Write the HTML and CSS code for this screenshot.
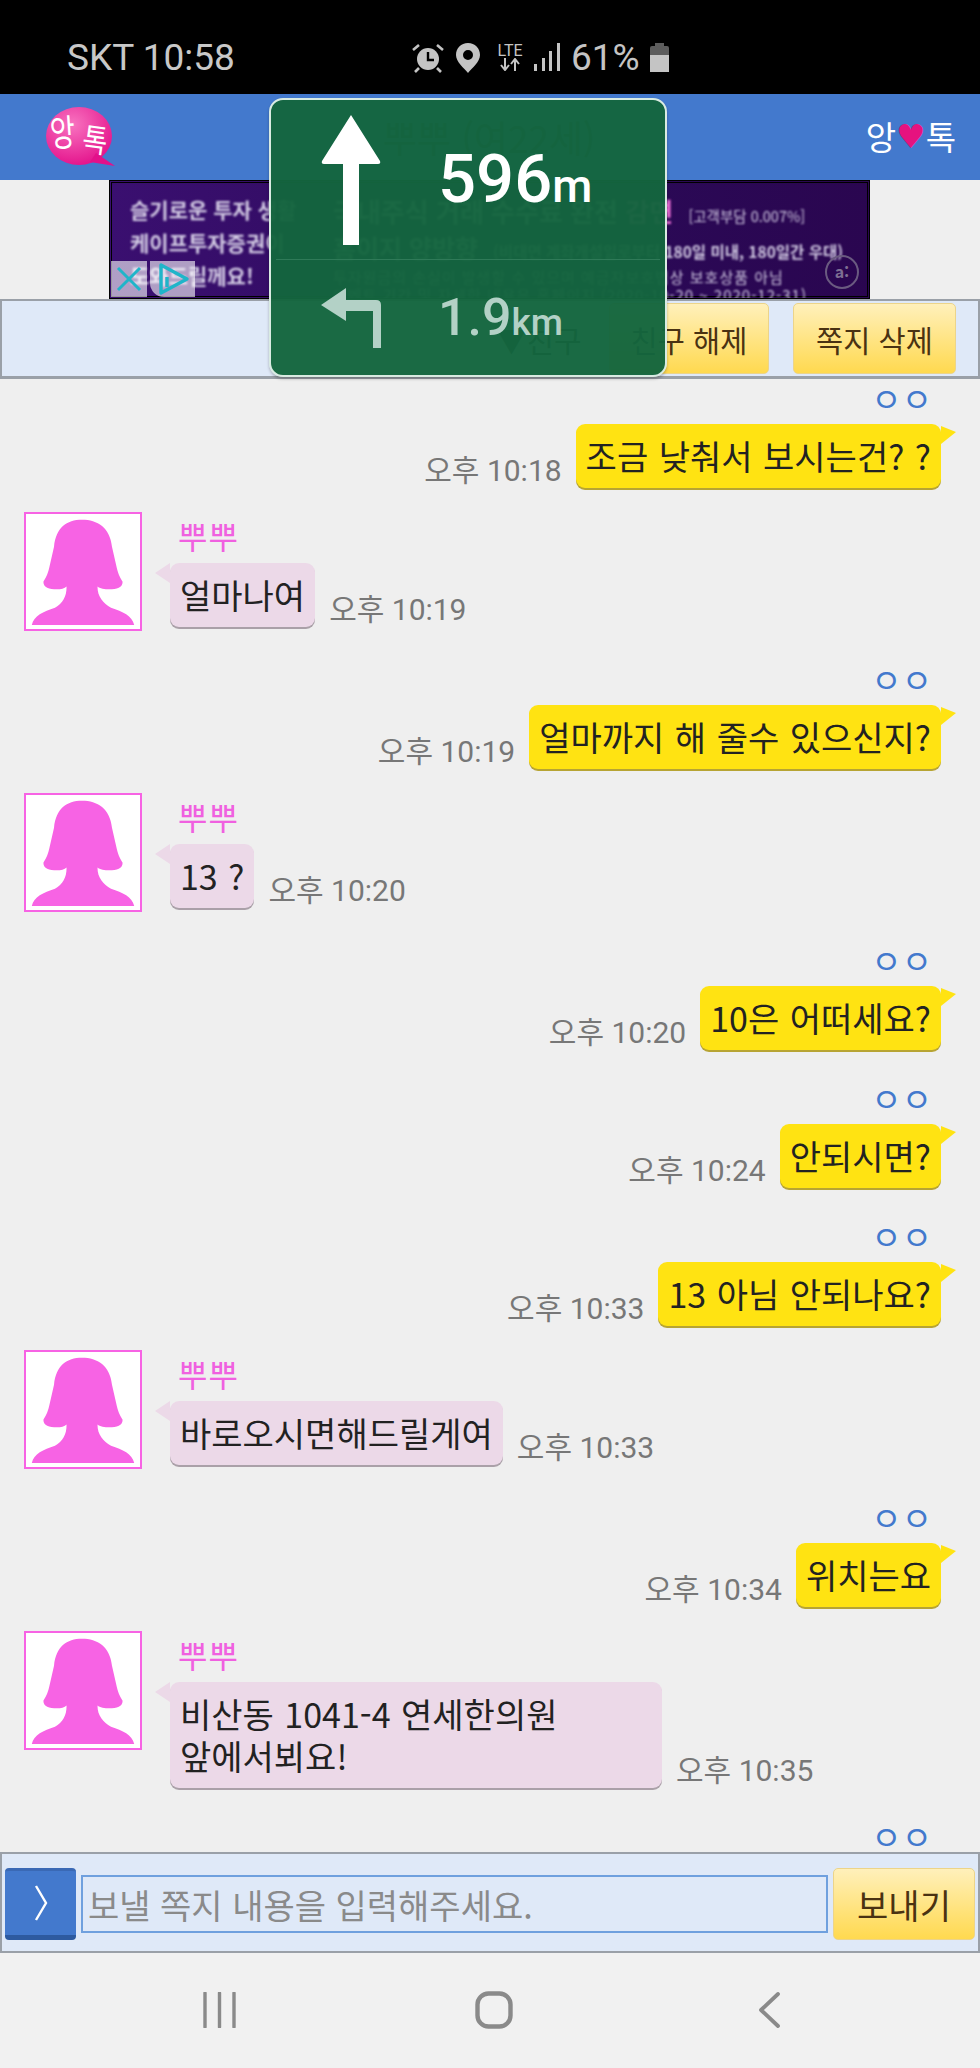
FILE: index.html
```html
<!DOCTYPE html>
<html lang="ko">
  <head>
    <meta charset="utf-8">
    <title>앙톡</title>
    <link rel="stylesheet" href="styles.css">
  </head>
  <body>
    <svg class="defs" width="0" height="0">
      <symbol id="girl" viewBox="0 0 118 119">
        <path d="M58 6C42 6 31 14 29 34L24 56C22 64 20 67 18 70C18 76 24 78 32 78C36 78 40 77 42 75C42 86 38 92 30 97C18 101 8 105 6 115H112C110 105 100 101 88 97C80 92 74 86 74 75C76 77 82 78 86 78C94 78 100 76 100 70C98 67 96 64 94 56L89 34C87 14 74 6 58 6Z"/>
      </symbol>
    </svg>

    <main id="screen">
      <header class="status">
        <span class="status-left">SKT 10:58</span>
        <div class="status-icons">
          <svg class="ico-alarm" width="32" height="30" viewBox="0 0 32 30">
            <circle cx="16" cy="16" r="11" fill="#c4c4c4"/>
            <path d="M16 9V17H22" fill="none" stroke="#000" stroke-width="2.4"/>
            <path d="M1 7L7 2M31 7L25 2M7 25L3 29M25 25L29 29" stroke="#c4c4c4" stroke-width="2.6" fill="none"/>
          </svg>
          <svg class="ico-pin" width="24" height="30" viewBox="0 0 24 30">
            <path fill-rule="evenodd" fill="#c4c4c4" d="M12 0C5 0 0 5 0 12C0 19 8 25 12 30C16 25 24 19 24 12C24 5 19 0 12 0ZM12 7A5 5 0 1 1 12 17A5 5 0 1 1 12 7Z"/>
          </svg>
          <div class="ico-lte">
            <span>LTE</span>
            <svg width="22" height="13" viewBox="0 0 22 13">
              <path d="M6 0V11M2 7L6 12L10 7M16 13V2M12 6L16 1L20 6" fill="none" stroke="#c4c4c4" stroke-width="2"/>
            </svg>
          </div>
          <svg class="ico-signal" width="26" height="28" viewBox="0 0 26 28">
            <path d="M0 21H3V28H0ZM8 15H11V28H8ZM15 8H18V28H15ZM23 0H26V28H23Z" fill="#c4c4c4"/>
          </svg>
          <span class="battery-text">61%</span>
          <div class="battery"><div class="battery-fill"></div></div>
        </div>
      </header>

      <header class="topbar">
        <svg class="logo" width="70" height="60" viewBox="0 0 70 60">
          <defs>
            <radialGradient id="pink" cx="40%" cy="30%" r="75%">
              <stop offset="0" stop-color="#f873c0"/>
              <stop offset="1" stop-color="#e3108a"/>
            </radialGradient>
          </defs>
          <ellipse cx="33" cy="29" rx="33" ry="29" fill="url(#pink)"/>
          <path d="M50 46L69 59L44 55Z" fill="#e3108a"/>
          <text transform="translate(5 40) rotate(-4) scale(.85 1.15)" class="logo-txt">앙</text>
          <text transform="translate(35 43) rotate(8) scale(.85 1)" class="logo-txt">톡</text>
        </svg>
        <span class="title">뿌뿌 (여22세)</span>
        <span class="brand">앙<i>♥</i>톡</span>
      </header>

      <section class="adrow">
        <div class="ad">
          <div class="ad-text">
            <div class="ad-left">
              <b>슬기로운 투자 생활</b>
              <b>케이프투자증권이</b>
              <b>도와드릴께요!</b>
            </div>
            <div class="ad-right">
              <div class="ad-line1">국내주식 거래 수수료 완전 <u>감면</u> <em>[고객부담 0.007%]</em></div>
              <div class="ad-line2">홈이지 양방향 <small>(비대면 계좌개설일로부터 180일 미내, 180일간 우대)</small></div>
              <div class="ad-line3">투자원금의 손실이 발생할 수 있으며 예금자보호법상 보호상품 아님</div>
              <div class="ad-line3">이벤트 기간 및 자세한 내용은 홈페이지 (2020-10-20 ~ 2020-12-31)</div>
            </div>
          </div>
          <span class="ad-mark">a:</span>
          <div class="adchoice">
            <span class="ad-x">
              <svg width="26" height="26" viewBox="0 0 26 26"><path d="M2 2L24 24M24 2L2 24" stroke="#1fb5c9" stroke-width="3"/></svg>
            </span>
            <span class="ad-play">
              <svg width="36" height="34" viewBox="0 0 36 34"><path d="M6 3L32 17L6 31Z M12 15V25" fill="none" stroke="#1fb5c9" stroke-width="3.4" stroke-linejoin="round"/></svg>
            </span>
          </div>
        </div>
      </section>

      <nav class="toolbar">
        <button class="btn btn-ghost">▼친구</button>
        <button class="btn btn-friend">친구 해제</button>
        <button class="btn btn-del">쪽지 삭제</button>
      </nav>

      <section class="chat">
        <div class="row sent">
          <div class="seen">ㅇㅇ</div>
          <div class="line"><span class="time">오후 10:18</span><div class="bubble">조금 낮춰서 보시는건? ?</div></div>
        </div>

        <div class="row recv">
          <svg class="avatar"><use href="#girl"/></svg>
          <div class="recv-body">
            <div class="name">뿌뿌</div>
            <div class="line"><div class="bubble">얼마나여</div><span class="time">오후 10:19</span></div>
          </div>
        </div>

        <div class="row sent">
          <div class="seen">ㅇㅇ</div>
          <div class="line"><span class="time">오후 10:19</span><div class="bubble">얼마까지 해 줄수 있으신지?</div></div>
        </div>

        <div class="row recv">
          <svg class="avatar"><use href="#girl"/></svg>
          <div class="recv-body">
            <div class="name">뿌뿌</div>
            <div class="line"><div class="bubble">13 ?</div><span class="time">오후 10:20</span></div>
          </div>
        </div>

        <div class="row sent">
          <div class="seen">ㅇㅇ</div>
          <div class="line"><span class="time">오후 10:20</span><div class="bubble">10은 어떠세요?</div></div>
        </div>

        <div class="row sent">
          <div class="seen">ㅇㅇ</div>
          <div class="line"><span class="time">오후 10:24</span><div class="bubble">안되시면?</div></div>
        </div>

        <div class="row sent">
          <div class="seen">ㅇㅇ</div>
          <div class="line"><span class="time">오후 10:33</span><div class="bubble">13 아님 안되나요?</div></div>
        </div>

        <div class="row recv">
          <svg class="avatar"><use href="#girl"/></svg>
          <div class="recv-body">
            <div class="name">뿌뿌</div>
            <div class="line"><div class="bubble">바로오시면해드릴게여</div><span class="time">오후 10:33</span></div>
          </div>
        </div>

        <div class="row sent">
          <div class="seen">ㅇㅇ</div>
          <div class="line"><span class="time">오후 10:34</span><div class="bubble">위치는요</div></div>
        </div>

        <div class="row recv">
          <svg class="avatar"><use href="#girl"/></svg>
          <div class="recv-body">
            <div class="name">뿌뿌</div>
            <div class="line"><div class="bubble bubble-wide">비산동 1041-4 연세한의원<br>앞에서뵈요!</div><span class="time">오후 10:35</span></div>
          </div>
        </div>

        <div class="row sent">
          <div class="seen">ㅇㅇ</div>
        </div>
      </section>

      <footer class="inputbar">
        <button class="toggle">
          <svg width="14" height="36" viewBox="0 0 14 36"><path d="M2 1L12 18L2 35" fill="none" stroke="#fff" stroke-width="2.4"/></svg>
        </button>
        <input class="msg" type="text" placeholder="보낼 쪽지 내용을 입력해주세요.">
        <button class="btn btn-send">보내기</button>
      </footer>

      <nav class="softkeys">
        <svg class="key-recent" width="33" height="36" viewBox="0 0 33 36"><path d="M2 1V35M16.500 1V35M31 1V35" stroke="#8a8a8a" stroke-width="3.400" stroke-linecap="round"/></svg>
        <svg class="key-home" width="38" height="38" viewBox="0 0 38 38"><rect x="2.500" y="2.500" width="33" height="33" rx="11" fill="none" stroke="#8a8a8a" stroke-width="4.400"/></svg>
        <svg class="key-back" width="22" height="36" viewBox="0 0 22 36"><path d="M20 2L3 18L20 34" fill="none" stroke="#8a8a8a" stroke-width="3.800" stroke-linecap="round" stroke-linejoin="round"/></svg>
      </nav>

      <aside class="navcard">
        <div class="nav-step">
          <svg class="nav-arrow" width="60" height="130" viewBox="0 0 60 130"><path d="M30 0L59 46Q60 49 57 49H38V130H22V49H3Q0 49 1 46Z" fill="#fff"/></svg>
          <span class="dist">596<small>m</small></span>
        </div>
        <div class="nav-step nav-next">
          <svg class="nav-arrow" width="60" height="60" viewBox="0 0 60 60"><path d="M0 17L25 0V12H55Q60 12 60 17V60H52V23H25V33Z" fill="#b3d1c6"/></svg>
          <span class="dist">1.9<small>km</small></span>
        </div>
      </aside>
    </main>
  </body>
</html>
```

FILE: styles.css
```css
*
{
  box-sizing: border-box;
}

html, body
{
  margin: 0;
  padding: 0;
}

body
{
  font-family: "Noto Sans CJK KR", "Noto Sans", sans-serif;
  background-color: #000;
}

.defs
{
  display: block;
  height: 0;
}

#screen
{
  position: relative;
  width: 980px;
  height: 2068px;
  display: flex;
  flex-direction: column;
  overflow: hidden;
  background-color: #efefef;
}

/* status bar */
.status
{
  height: 94px;
  flex: none;
  background-color: #000;
  color: #c4c4c4;
  display: flex;
  padding: 37px 0 0 67px;
  font-family: Roboto, sans-serif;
}

.status-left
{
  width: 345px;
  font-size: 37px;
  line-height: 42px;
  color: #c8c8c8;
}

.status-icons
{
  display: flex;
  align-items: flex-start;
  padding-top: 6px;
}

.ico-alarm  { margin-right: 12px; }
.ico-pin    { margin-right: 15px; }

.ico-lte
{
  width: 30px;
  margin-right: 9px;
  display: flex;
  flex-direction: column;
  align-items: center;
}

.ico-lte span
{
  font-size: 16px;
  line-height: 15px;
}

.ico-signal { margin-right: 11px; }

.battery-text
{
  font-size: 37px;
  line-height: 30px;
  width: 79px;
}

.battery
{
  position: relative;
  width: 19px;
  height: 26px;
  margin-top: 3px;
  background-color: #5c5c5c;
  border-radius: 2px;
}

.battery::before
{
  content: "";
  position: absolute;
  left: 5px;
  top: -3px;
  width: 9px;
  height: 3px;
  background-color: #5c5c5c;
}

.battery-fill
{
  height: 17px;
  margin-top: 9px;
  background-color: #c4c4c4;
}

/* blue title bar */
.topbar
{
  height: 86px;
  flex: none;
  background-color: #4379cd;
  display: flex;
  align-items: center;
  padding: 0 24px 0 46px;
  color: #fff;
}

.logo-txt
{
  font-size: 32px;
  fill: #fff;
}

.title
{
  margin-left: 267px;
  font-size: 37px;
  color: #2a3f5c;
}

.brand
{
  margin-left: auto;
  margin-top: -2px;
  font-size: 33px;
  color: #fff;
  display: flex;
  align-items: center;
}

.brand i
{
  font-style: normal;
  font-family: "DejaVu Sans", sans-serif;
  font-size: 33px;
  color: #e6127f;
  line-height: 1;
}

/* banner */
.adrow
{
  height: 119px;
  flex: none;
  display: flex;
  justify-content: center;
}

.ad
{
  position: relative;
  width: 761px;
  height: 119px;
  margin-left: -1px;
  border: 1px solid #000;
  outline: 1px solid #000;
  outline-offset: -3px;
  background: linear-gradient(90deg, #3a0f70 0, #2b0a58 60%, #2a0650 100%);
  overflow: hidden;
}

.ad-text
{
  display: flex;
  filter: blur(1px);
  padding: 15px 0 0 20px;
  color: #d3cbe4;
}

.ad-left
{
  width: 203px;
  flex: none;
  display: flex;
  flex-direction: column;
  gap: 6px;
}

.ad-left b
{
  font-size: 21px;
  line-height: 27px;
  white-space: nowrap;
}

.ad-right
{
  white-space: nowrap;
}

.ad-line1
{
  font-size: 26px;
  font-weight: 700;
  line-height: 30px;
}

.ad-line1 u
{
  text-decoration: none;
  color: #f070d8;
}

.ad-line1 em
{
  font-size: 14.500px;
  font-style: normal;
  font-weight: 400;
  margin-left: 8px;
}

.ad-line2
{
  font-size: 25px;
  font-weight: 700;
  line-height: 33px;
}

.ad-line2 small
{
  font-size: 15.500px;
  margin-left: 8px;
  font-weight: 700;
}

.ad-line3
{
  font-size: 15px;
  letter-spacing: 1px;
  line-height: 18px;
  font-weight: 400;
}

.ad-mark
{
  position: absolute;
  right: 10px;
  bottom: 9px;
  width: 34px;
  height: 34px;
  border: 2px solid #6a5a80;
  border-radius: 50%;
  color: #7d6e92;
  font-size: 16px;
  font-weight: 700;
  line-height: 28px;
  text-align: center;
}

.adchoice
{
  position: absolute;
  left: 1px;
  bottom: 1px;
  display: flex;
  gap: 3px;
}

.ad-x
{
  width: 36px;
  height: 36px;
  display: flex;
  align-items: center;
  justify-content: center;
  background-color: rgba(255, 255, 255, 0.6);
}

.ad-play
{
  width: 45px;
  height: 36px;
  display: flex;
  align-items: center;
  justify-content: center;
  background-color: rgba(255, 255, 255, 0.6);
  border-bottom-left-radius: 14px;
}

/* friend / delete buttons */
.toolbar
{
  height: 80px;
  flex: none;
  background-color: #dfe9f8;
  border: 2px solid #9aa0a8;
  border-bottom-width: 3px;
  display: flex;
  justify-content: flex-end;
  align-items: center;
  gap: 24px;
  padding-right: 22px;
}

.btn
{
  font-family: inherit;
  color: #4a3212;
  border: 1px solid #ecd48a;
  border-radius: 5px;
  background: linear-gradient(#fff0bb, #ffd94f);
  padding: 0;
}

.btn-ghost
{
  width: 100px;
  height: 71px;
  margin-right: -4px;
  background: none;
  border: 0;
  font-size: 30px;
  color: #222;
}

.btn-friend
{
  width: 160px;
  height: 71px;
  font-size: 29.500px;
}

.btn-del
{
  width: 163px;
  height: 71px;
  font-size: 29.500px;
}

/* messages */
.chat
{
  flex: 1;
  min-height: 0;
  overflow: hidden;
  padding-top: 4px;
  display: flex;
  flex-direction: column;
  gap: 33px;
}

.row
{
  flex: none;
}

.sent
{
  display: flex;
  flex-direction: column;
  align-items: flex-end;
  padding-right: 39px;
}

.seen
{
  height: 30px;
  margin-bottom: 11px;
  font-size: 33px;
  line-height: 30px;
  color: #4379cd;
  padding-right: 9px;
  flex: none;
}

.line
{
  display: flex;
  align-items: flex-end;
  gap: 14px;
}

.bubble
{
  position: relative;
  font-size: 34px;
  line-height: 42px;
  word-spacing: 1px;
  padding: 11px 10px;
  border-radius: 9px;
  color: #222;
  white-space: nowrap;
}

.sent .bubble
{
  background-color: #ffe312;
  box-shadow: 0 2px 0 #b7a433;
}

.sent .bubble::after
{
  content: "";
  position: absolute;
  left: 100%;
  top: 2px;
  width: 15px;
  height: 18px;
  background-color: #ffe312;
  clip-path: polygon(0 0, 100% 33%, 0 100%);
}

.recv
{
  display: flex;
  margin-top: -9px;
  padding-left: 24px;
  gap: 28px;
}

.avatar
{
  width: 118px;
  height: 119px;
  flex: none;
  background-color: #fff;
  border: 2px solid #f763e4;
  fill: #f763e4;
}

.name
{
  height: 51px;
  padding: 3px 0 0 8px;
  font-size: 32px;
  letter-spacing: 1px;
  line-height: 40px;
  color: #f060e0;
}

.recv .bubble
{
  background-color: #ecd9e8;
  box-shadow: 0 2px 0 #aaa0a8;
}

.recv .bubble::before
{
  content: "";
  position: absolute;
  right: 100%;
  top: 0;
  width: 15px;
  height: 20px;
  background-color: #ecd9e8;
  clip-path: polygon(100% 0, 0 50%, 100% 100%);
}

.bubble-wide
{
  width: 492px;
}

.time
{
  font-family: Roboto, "Noto Sans CJK KR", sans-serif;
  font-size: 30px;
  line-height: 34px;
  color: #777;
  white-space: nowrap;
}

/* input bar */
.inputbar
{
  height: 101px;
  flex: none;
  background-color: #dfe9f8;
  border: 2px solid #9aa0a8;
  display: flex;
  align-items: center;
  padding: 3px 3px 0 3px;
  position: relative;
}

.toggle
{
  width: 71px;
  height: 72px;
  flex: none;
  padding: 0;
  border: 0;
  border-top: 3px solid #3a69b5;
  border-bottom: 5px solid #2d5aa0;
  border-radius: 4px;
  background-color: #4379cd;
  display: flex;
  align-items: center;
  justify-content: center;
}

.msg
{
  flex: 1;
  min-width: 0;
  height: 58px;
  margin: 0 5px;
  padding: 0 5px;
  background-color: #dfe9f8;
  border: 2px solid #6fa0de;
  font-family: inherit;
  font-size: 34px;
}

.msg::placeholder
{
  color: #8a8a8a;
  opacity: 1;
}

.btn-send
{
  width: 142px;
  height: 72px;
  flex: none;
  font-size: 34px;
}

/* android keys */
.softkeys
{
  height: 115px;
  flex: none;
  background-color: #f1f1f1;
  display: flex;
  align-items: flex-start;
  padding: 38px 0 0 203px;
}

.key-recent { margin-top: 1px; }
.key-home   { margin-left: 239px; }
.key-back   { margin-left: 245px; margin-top: 1px; }

/* floating navigation window over the page */
.navcard
{
  position: absolute;
  left: 269px;
  top: 98px;
  width: 398px;
  height: 279px;
  background-color: rgba(20, 101, 62, 0.97);
  border: 2px solid #d9ebe2;
  border-radius: 14px;
  box-shadow: 0 2px 3px rgba(0, 0, 0, 0.25);
  display: flex;
  flex-direction: column;
  font-family: Roboto, sans-serif;
  color: #fff;
}

.nav-step
{
  height: 160px;
  flex: none;
  margin: 0 5px;
  padding-left: 45px;
  display: flex;
  align-items: center;
  gap: 57px;
  border-bottom: 1px solid #2f7a58;
}

.nav-next
{
  height: 115px;
  border-bottom: 0;
  color: #b3d1c6;
}

.dist
{
  font-size: 67px;
  font-weight: 500;
  line-height: 1;
}

.dist small
{
  font-size: 46px;
}

.nav-next .dist
{
  font-size: 52px;
}

.nav-next .dist small
{
  font-size: 37px;
}
```
